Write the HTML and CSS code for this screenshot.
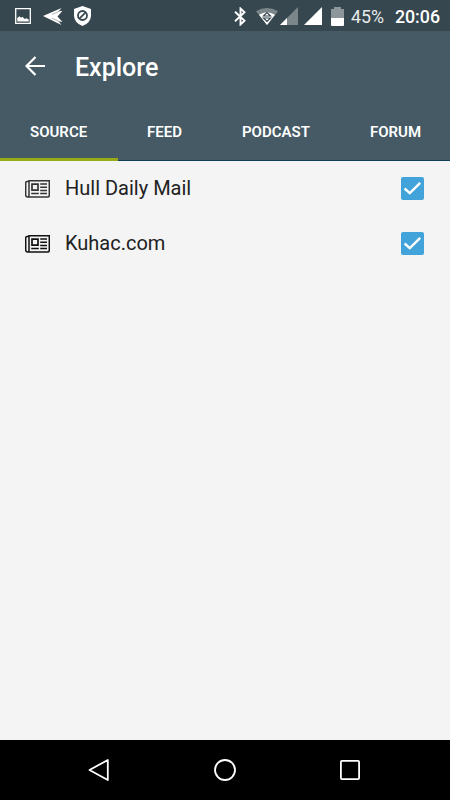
FILE: index.html
```html
<!DOCTYPE html>
<html lang="en">
<head>
    <meta charset="UTF-8">
    <meta name="viewport" content="width=device-width, initial-scale=1.0">
    <title>Explore</title>
    <link rel="stylesheet" href="styles.css">
</head>
<body>
    <!-- shared icons -->
    <svg class="sprite" aria-hidden="true">
        <symbol id="newspaper" viewBox="0 0 25 18">
            <path d="M4 1.5H2Q.7 1.5 .7 3V15Q.7 17.1 2.6 17.1H22.4Q24.3 17.1 24.3 15.3V.8H4V15Q4 17.1 2.6 17.1" fill="none" stroke="currentColor" stroke-width="1.5"/>
            <path d="M7 4.2H13V10.2H7Z" fill="none" stroke="currentColor" stroke-width="1.7"/>
            <path d="M15.2 4H22M15.2 7.2H22M15.2 10.4H22M6.2 13.6H13.8M15.2 13.6H22" stroke="currentColor" stroke-width="1.5"/>
        </symbol>
        <symbol id="tick" viewBox="0 0 23 23">
            <path d="M3.6 11.5L8.8 16.2L19.2 5.8" fill="none" stroke="#fff" stroke-width="2.4"/>
        </symbol>
    </svg>

    <div class="phone">
        <div class="statusbar">
            <svg class="picture" width="16" height="16" viewBox="0 0 16 16">
                <path d="M.7.7H15.3V15.3H.7Z" fill="none" stroke="#fff" stroke-width="1.3"/>
                <path d="M2.3 13.5V10L4.5 8.3L6 9.8L7.5 8.8L9.5 11L11.5 10.3L13.7 11.5V13.5Z" fill="#fff"/>
            </svg>
            <svg class="plane" width="20" height="17" viewBox="0 0 20 17">
                <path d="M0 8L18.5 0L15.5 3.5L19.5 2.7L14.5 8.5L19.5 14L15.5 13.3L18.5 17Z" fill="#fff"/>
                <path d="M9 6.5L16 3.4M9 10.2L16 13.4" stroke="#37474f" stroke-width=".4"/>
            </svg>
            <svg class="shield" width="17" height="20" viewBox="0 0 17 20">
                <path d="M8.5 0L17 3V10Q16.5 17 8.5 20Q.5 17 0 10V3Z" fill="#fff"/>
                <circle cx="8.5" cy="9.5" r="4.5" fill="none" stroke="#37474f" stroke-width="1.8"/>
                <path d="M5.4 12.6L11.6 6.4" stroke="#37474f" stroke-width="1.8"/>
            </svg>

            <svg class="bluetooth" width="12" height="19" viewBox="0 0 12 19">
                <path d="M1 4.8L10.5 13.8L6.5 17.5V1.5L10.5 5.2L1 14.2" fill="none" stroke="#fff" stroke-width="1.9"/>
            </svg>
            <svg class="wifi" width="22" height="17" viewBox="0 0 22 17">
                <path d="M0 3.2Q11-3.2 22 3.2L11 17Z" fill="#7b868b"/>
                <path d="M3 6.8Q11 1.8 19 6.8L11 17Z" fill="#fff"/>
                <path d="M7.5 8L11 4.5L14.5 8ZM7.5 10H14.5L11 13.5Z" fill="none" stroke="#37474f" stroke-width="1.2"/>
            </svg>
            <svg class="signal" width="18" height="18" viewBox="0 0 18 18">
                <path d="M0 18L18 0V18Z" fill="#7b868b"/>
                <path d="M0 18L7 11V18Z" fill="#fff"/>
            </svg>
            <svg class="signal-full" width="18" height="18" viewBox="0 0 18 18">
                <path d="M0 18L18 0V18Z" fill="#fff"/>
            </svg>
            <svg class="battery" width="13" height="19" viewBox="0 0 13 19">
                <path d="M0 2H3V0H10V2H13V11H0Z" fill="#8d979b"/>
                <path d="M0 11H13V18Q13 19 12 19H1Q0 19 0 18Z" fill="#fff"/>
            </svg>
            <span class="percent">45%</span>
            <span class="clock">20:06</span>
        </div>

        <header class="header">
            <div class="toolbar">
                <svg class="back" width="20" height="20" viewBox="0 0 20 20">
                    <path d="M20 10H1.5M10.5 .9L1.5 10L10.5 19.1" fill="none" stroke="#fff" stroke-width="2.2"/>
                </svg>
                <h1 class="title">Explore</h1>
            </div>
            <nav class="tabs">
                <div class="tab active">SOURCE</div>
                <div class="tab feed">FEED</div>
                <div class="tab podcast">PODCAST</div>
                <div class="tab forum">FORUM</div>
            </nav>
        </header>

        <main class="list">
            <div class="row">
                <svg class="paper light"><use href="#newspaper"/></svg>
                <span class="name">Hull Daily Mail</span>
                <svg class="checkbox"><use href="#tick"/></svg>
            </div>
            <div class="row">
                <svg class="paper"><use href="#newspaper"/></svg>
                <span class="name">Kuhac.com</span>
                <svg class="checkbox"><use href="#tick"/></svg>
            </div>
        </main>

        <div class="navbar">
            <svg width="22" height="24" viewBox="0 0 22 24">
                <path d="M1.5 12L19.8 2V22Z" fill="none" stroke="#fff" stroke-width="1.8" stroke-linejoin="round"/>
            </svg>
            <svg width="22" height="22" viewBox="0 0 22 22">
                <circle cx="11" cy="11" r="10" fill="none" stroke="#fff" stroke-width="1.8"/>
            </svg>
            <svg width="20" height="20" viewBox="0 0 20 20">
                <rect x=".9" y=".9" width="18.2" height="18.2" rx="1" fill="none" stroke="#fff" stroke-width="1.8"/>
            </svg>
        </div>
    </div>
</body>
</html>
```
FILE: styles.css
```css
*{
    margin: 0;
    padding: 0;
    box-sizing: border-box;
}

body{
    font-family: Roboto, "Liberation Sans", sans-serif;
    background-color: #f4f4f4;
}

svg{
    display: block;
    flex-shrink: 0;
}

.sprite{
    display: none;
}

.phone{
    width: 450px;
    height: 800px;
    display: flex;
    flex-direction: column;
    overflow: hidden;
}

/* status bar */
.statusbar{
    height: 31px;
    display: flex;
    align-items: center;
    padding: 1px 10px 0 15px;
    background-color: #37474f;
    color: #fff;
    white-space: nowrap;
}

.plane{
    margin-left: 12px;
}

.shield{
    margin-left: 11px;
}

.bluetooth{
    margin-left: 143px;
}

.wifi{
    margin-left: 10px;
}

.signal{
    margin-left: 2px;
}

.signal-full{
    margin-left: 6px;
}

.battery{
    margin-left: 9px;
}

.percent{
    margin-left: 7px;
    width: 34px;
    font-size: 17.8px;
    color: #e8ebec;
}

.clock{
    margin-left: 10px;
    font-size: 17.8px;
    font-weight: 500;
}

/* header */
.header{
    height: 130px;
    display: flex;
    flex-direction: column;
    flex-shrink: 0;
    background-color: #455a64;
    border-bottom: 1px solid #0f3f56;
    color: #fff;
}

.toolbar{
    height: 72px;
    display: flex;
    align-items: center;
    flex-shrink: 0;
    padding-left: 25px;
}

.back{
    margin-bottom: 2px;
}

.title{
    margin-left: 30px;
    font-size: 25px;
    font-weight: 500;
}

.tabs{
    flex: 1;
    display: flex;
    margin-bottom: -1px;
}

.tab{
    width: 118px;
    padding: 3px 0 0 30px;
    font-size: 15px;
    font-weight: 600;
    line-height: 52px;
    flex-shrink: 0;
}

.tab.active{
    border-bottom: 3px solid #98ab17;
}

.feed{
    width: 94px;
    padding-left: 29px;
}

.podcast{
    width: 128px;
}

/* sources */
.list{
    flex: 1;
    background-color: #f4f4f4;
}

.row{
    height: 55px;
    display: flex;
    align-items: center;
    padding: 0 26px 0 25px;
}

.paper{
    width: 25px;
    height: 18px;
    color: #111;
}

.paper.light{
    color: #333;
}

.name{
    flex: 1;
    margin-left: 15px;
    padding-bottom: 2px;
    font-size: 20px;
    color: #212121;
}

.checkbox{
    width: 23px;
    height: 23px;
    background-color: #41a3da;
    border-radius: 2px;
}

/* bottom buttons */
.navbar{
    height: 60px;
    display: flex;
    align-items: center;
    justify-content: space-between;
    padding: 0 90px 0 88px;
    background-color: #000;
}
```
